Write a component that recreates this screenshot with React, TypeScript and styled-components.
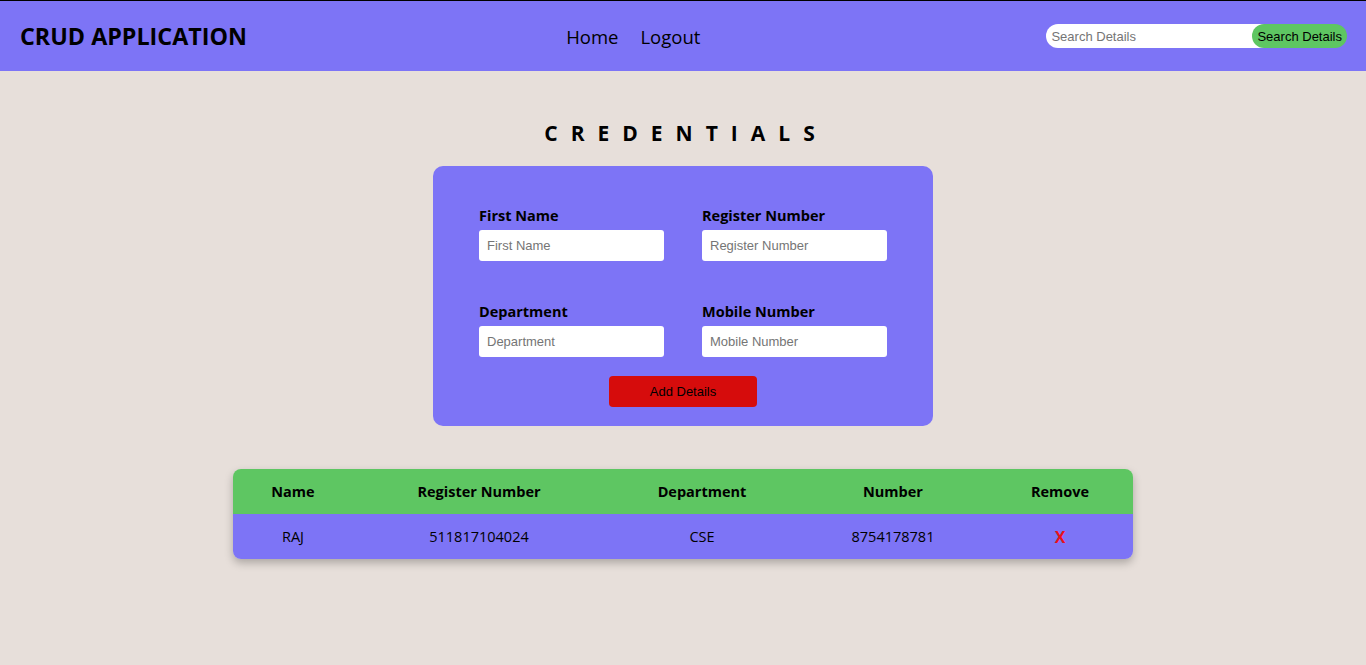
import React from "react";
import styled, { createGlobalStyle } from "styled-components";

const Global = createGlobalStyle`
  html, body { margin: 0; padding: 0; }
  body {
    background: #e7dfda;
    font-family: "Open Sans", "Noto Sans", sans-serif;
    color: #000;
    border-top: 1px solid #000;
    min-height: 664px;
  }
`;

const PURPLE = "#7d74f6";
const GREEN = "#5ec662";

const NavBar = styled.header`
  height: 70px;
  background: ${PURPLE};
  display: flex;
  justify-content: space-between;
  align-items: center;
  padding: 0 19px 0 20px;
`;

const Brand = styled.h1`
  margin: 0;
  font-size: 23.3px;
  font-weight: 700;
  width: 226px;
  white-space: nowrap;
`;

const NavLinks = styled.nav`
  display: flex;
  gap: 22px;
  margin-right: 26px;
`;

const NavLink = styled.a`
  font-size: 18.5px;
  color: #000;
  text-decoration: none;
`;

const SearchForm = styled.form`
  display: flex;
  align-items: center;
`;

const SearchInput = styled.input`
  width: 226px;
  height: 24px;
  box-sizing: border-box;
  border: none;
  border-radius: 12px 0 0 12px;
  padding: 0 5px;
  font-family: "Liberation Sans", Arial, sans-serif;
  font-size: 13px;
  outline: none;
  margin-right: -20px;
  &::placeholder { color: #757575; }
`;

const SearchButton = styled.button`
  position: relative;
  height: 24px;
  border: none;
  border-radius: 12px;
  background: ${GREEN};
  padding: 0 5px;
  font-family: "Liberation Sans", Arial, sans-serif;
  font-size: 13px;
  color: #000;
`;

const Main = styled.main`
  display: flex;
  flex-direction: column;
  align-items: center;
  padding-top: 47px;
`;

const Heading = styled.h2`
  margin: 0 0 18px 6px;
  font-size: 21px;
  font-weight: 700;
  letter-spacing: 13px;
  line-height: 30px;
`;

const Card = styled.form`
  width: 500px;
  height: 260px;
  box-sizing: border-box;
  background: ${PURPLE};
  border-radius: 10px;
  padding: 40px 46px 0 46px;
  display: grid;
  grid-template-columns: 185px 185px;
  column-gap: 38px;
  row-gap: 41px;
  align-content: start;
`;

const Field = styled.label`
  display: flex;
  flex-direction: column;
  gap: 4px;
`;

const LabelText = styled.span`
  font-size: 14.5px;
  font-weight: 700;
  line-height: 20px;
`;

const TextInput = styled.input`
  height: 31px;
  box-sizing: border-box;
  border: none;
  border-radius: 3px;
  padding: 0 8px;
  font-family: "Liberation Sans", Arial, sans-serif;
  font-size: 13px;
  outline: none;
  &::placeholder { color: #757575; }
`;

const AddButton = styled.button`
  grid-column: 1 / -1;
  justify-self: center;
  margin-top: -22px;
  width: 148px;
  height: 31px;
  border: none;
  border-radius: 4px;
  background: #d60c0c;
  font-family: "Liberation Sans", Arial, sans-serif;
  font-size: 13px;
  color: #000;
`;

const Table = styled.div`
  margin-top: 43px;
  width: 900px;
  border-radius: 8px;
  overflow: hidden;
  box-shadow: 0 4px 8px rgba(0, 0, 0, 0.25);
`;

const Row = styled.div<{ $head?: boolean }>`
  display: grid;
  grid-template-columns: 120px 252px 194px 188px 146px;
  height: 45px;
  align-items: center;
  background: ${(p) => (p.$head ? GREEN : PURPLE)};
  font-size: 14.5px;
  font-weight: ${(p) => (p.$head ? 700 : 400)};
`;

const Cell = styled.div`
  text-align: center;
`;

const RemoveMark = styled.span`
  color: #e8111a;
  font-weight: 700;
  font-size: 16px;
  cursor: pointer;
`;

export default function App() {
  return (
    <>
      <Global />
      <NavBar>
        <Brand>CRUD APPLICATION</Brand>
        <NavLinks>
          <NavLink href="#">Home</NavLink>
          <NavLink href="#">Logout</NavLink>
        </NavLinks>
        <SearchForm onSubmit={(e) => e.preventDefault()}>
          <SearchInput placeholder="Search Details" />
          <SearchButton type="submit">Search Details</SearchButton>
        </SearchForm>
      </NavBar>
      <Main>
        <Heading>CREDENTIALS</Heading>
        <Card onSubmit={(e) => e.preventDefault()}>
          <Field>
            <LabelText>First Name</LabelText>
            <TextInput placeholder="First Name" />
          </Field>
          <Field>
            <LabelText>Register Number</LabelText>
            <TextInput placeholder="Register Number" />
          </Field>
          <Field>
            <LabelText>Department</LabelText>
            <TextInput placeholder="Department" />
          </Field>
          <Field>
            <LabelText>Mobile Number</LabelText>
            <TextInput placeholder="Mobile Number" />
          </Field>
          <AddButton type="submit">Add Details</AddButton>
        </Card>
        <Table>
          <Row $head>
            <Cell>Name</Cell>
            <Cell>Register Number</Cell>
            <Cell>Department</Cell>
            <Cell>Number</Cell>
            <Cell>Remove</Cell>
          </Row>
          <Row>
            <Cell>RAJ</Cell>
            <Cell>511817104024</Cell>
            <Cell>CSE</Cell>
            <Cell>8754178781</Cell>
            <Cell>
              <RemoveMark>X</RemoveMark>
            </Cell>
          </Row>
        </Table>
      </Main>
    </>
  );
}
